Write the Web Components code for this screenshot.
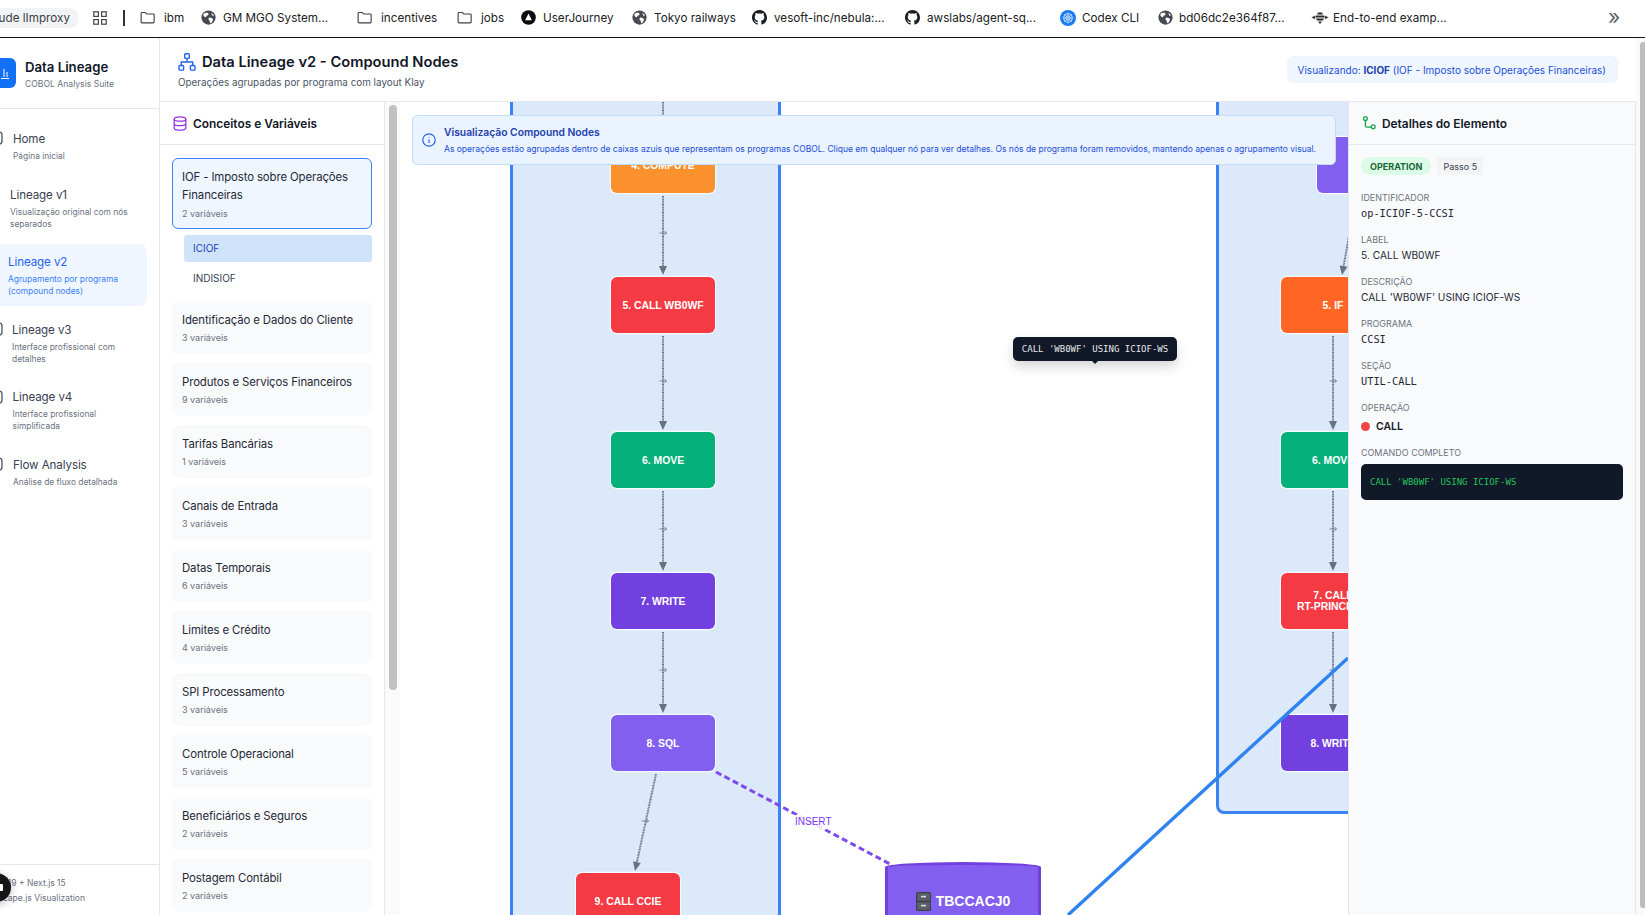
<!DOCTYPE html>
<html>
<head>
<meta charset="utf-8">
<title>Data Lineage</title>
<style>
  html, body { margin: 0; height: 100%; overflow: hidden; background: #fff; }
  body { font-family: Inter, "Liberation Sans", sans-serif; color: #111827; }
  #page { display: flex; flex-direction: column; width: 1645px; height: 915px; }
</style>
</head>
<body>
<div id="page">
  <bookmark-bar></bookmark-bar>
  <lineage-app></lineage-app>
</div>

<script>
const ICONS = {
  folder: `<svg viewBox="0 0 16 16" width="15" height="15" fill="none" stroke="#3c4043" stroke-width="1.2"><path d="M1.2 3.6c0-.5.4-.9.9-.9h3.6l1.5 1.6h7c.5 0 .9.4.9.9v7.6c0 .5-.4.9-.9.9H2.1c-.5 0-.9-.4-.9-.9z"/></svg>`,
  globe: `<svg viewBox="0 0 16 16" width="15" height="15"><circle cx="8" cy="8" r="7.6" fill="#474b50"/><path d="M3 3.6l3.2-.9 2 1.2-.7 1.8-1.7.4-.4 1.6-1.8-.5-1.2-1.6zM8.6 8l3 .5 1.4 1.6-1.6 3.2-1.7.7-.5-2.6-1.4-1.6zM11 2.8l2 1.6.7 2-1.8-.5z" fill="#fff"/></svg>`,
  journey: `<svg viewBox="0 0 16 16" width="15" height="15"><circle cx="8" cy="8" r="7.8" fill="#0c0c0c"/><path d="M8 3.8l3.6 7H4.4z" fill="#fff"/></svg>`,
  github: `<svg viewBox="0 0 16 16" width="15" height="15"><path fill="#1b1f23" d="M8 0C3.58 0 0 3.58 0 8c0 3.54 2.29 6.53 5.47 7.59.4.07.55-.17.55-.38 0-.19-.01-.82-.01-1.49-2.01.37-2.53-.49-2.69-.94-.09-.23-.48-.94-.82-1.13-.28-.15-.68-.52-.01-.53.63-.01 1.08.58 1.23.82.72 1.21 1.87.87 2.33.66.07-.52.28-.87.51-1.07-1.78-.2-3.64-.89-3.64-3.95 0-.87.31-1.59.82-2.15-.08-.2-.36-1.02.08-2.12 0 0 .67-.21 2.2.82.64-.18 1.32-.27 2-.27.68 0 1.36.09 2 .27 1.53-1.04 2.2-.82 2.2-.82.44 1.1.16 1.92.08 2.12.51.56.82 1.27.82 2.15 0 3.07-1.87 3.75-3.65 3.95.29.25.54.73.54 1.48 0 1.07-.01 1.93-.01 2.2 0 .21.15.46.55.38A8.013 8.013 0 0016 8c0-4.42-3.58-8-8-8z"/></svg>`,
  codex: `<svg viewBox="0 0 16 16" width="16" height="16"><circle cx="8" cy="8" r="8" fill="#1a7cf0"/><circle cx="8" cy="8" r="4.2" fill="none" stroke="#cfe3fd" stroke-width="1.1"/><circle cx="8" cy="8" r="2.2" fill="none" stroke="#fff" stroke-width=".9"/><path d="M8 2.4v11.2M2.4 8h11.2M4 4l8 8M12 4l-8 8" stroke="#bcd8fb" stroke-width=".6"/></svg>`,
  bee: `<svg viewBox="0 0 18 16" width="18" height="16"><path d="M7 2.5h4l1 2H6zM5 5.6h8l1 2H4zM5 8.6h8l-1 2H6zM7 11.6h4l-2 2.4z" fill="#2a2a2a"/><path d="M4 5.5L.4 7.5 4 9.2zM14 5.5l3.6 2L14 9.2z" fill="#3f3f3f"/></svg>`,
};

// chrome's bookmark strip; every item carries its own slot width
class BookmarkBar extends HTMLElement {
  connectedCallback() {
    const items = [
      ['folder', 'ibm', 61, 9],
      ['globe', 'GM MGO System...', 156, 7],
      ['folder', 'incentives', 100, 9],
      ['folder', 'jobs', 64, 9],
      ['journey', 'UserJourney', 111, 7],
      ['globe', 'Tokyo railways', 120, 7],
      ['github', 'vesoft-inc/nebula:...', 153, 7],
      ['github', 'awslabs/agent-sq...', 155, 7],
      ['codex', 'Codex CLI', 98, 6],
      ['globe', 'bd06dc2e364f87...', 153, 6],
      ['bee', 'End-to-end examp...', 140, 4],
    ];
    this.attachShadow({ mode: 'open' }).innerHTML = `
      <style>
        :host {
          display: flex;
          align-items: center;
          height: 35px;
          padding-bottom: 2px;
          flex: none;
          border-bottom: 1.5px solid #111;
          font: 11.7px Inter, "Liberation Sans", sans-serif;
          color: #202124;
          overflow: hidden;
        }
        .tab {
          width: 78px;
          height: 20px;
          display: flex;
          align-items: center;
          justify-content: flex-end;
          padding-right: 8px;
          box-sizing: border-box;
          background: #f1f3f4;
          border-radius: 0 8px 8px 0;
          white-space: nowrap;
          color: #3c4043;
          overflow: hidden;
        }
        .apps { margin-left: 15px; width: 14px; height: 14px; flex: none; }
        .sep { margin-left: 16px; width: 2px; height: 16px; background: #333; flex: none; }
        .items { display: flex; margin-left: 15px; }
        .item { display: flex; align-items: center; flex: none; white-space: nowrap; }
        .item svg { flex: none; }
        .more { margin-left: 157px; color: #5f6368; font-size: 21px; line-height: 1; margin-top: -3px; }
      </style>
      <div class="tab">ude lImproxy</div>
      <svg class="apps" viewBox="0 0 14 14" fill="none" stroke="#444" stroke-width="1.2">
        <rect x=".8" y=".8" width="4.6" height="4.6"/><rect x="8.6" y=".8" width="4.6" height="4.6"/>
        <rect x=".8" y="8.6" width="4.6" height="4.6"/><rect x="8.6" y="8.6" width="4.6" height="4.6"/>
      </svg>
      <div class="sep"></div>
      <div class="items">
        ${items.map(([icon, text, width, gap]) => `
          <div class="item" style="width:${width}px;gap:${gap}px">${ICONS[icon]}<span>${text}</span></div>
        `).join('')}
      </div>
      <div class="more">»</div>
    `;
  }
}

class NavItem extends HTMLElement {
  connectedCallback() {
    const x = Number(this.getAttribute('x'));
    this.attachShadow({ mode: 'open' }).innerHTML = `
      <style>
        :host {
          display: flex;
          flex: none;
          height: ${this.getAttribute('h') || 62}px;
          margin-right: 12px;
          padding-left: ${x}px;
          box-sizing: border-box;
          border-radius: 0 8px 8px 0;
          font-size: 11.6px;
          letter-spacing: -.1px;
          color: #374151;
          align-items: center;
          position: relative;
        }
        :host([active]) { background: #eff6ff; color: #2563eb; }
        .desc { font-size: 8.4px; letter-spacing: 0; line-height: 12px; color: #6b7280; margin-top: 3px; white-space: pre-line; }
        :host([active]) .desc { color: #3b82f6; }
        .title { line-height: 16px; }
        .glyph { position: absolute; left: -11px; top: 50%; width: 14px; height: 14px; margin-top: var(--gy, -14px); }
      </style>
      ${this.hasAttribute('glyph') ? `<svg class="glyph" viewBox="0 0 14 14" fill="none" stroke="#4b5563" stroke-width="1.3"><rect x="1" y="1" width="12" height="12" rx="3"/></svg>` : ''}
      <div>
        <div class="title">${this.getAttribute('title')}</div>
        <div class="desc">${this.getAttribute('desc')}</div>
      </div>
    `;
  }
}

class AppSidebar extends HTMLElement {
  connectedCallback() {
    this.attachShadow({ mode: 'open' }).innerHTML = `
      <style>
        :host {
          display: flex;
          flex-direction: column;
          flex: none;
          width: 160px;
          box-sizing: border-box;
          border-right: 1px solid #e5e7eb;
          overflow: hidden;
          position: relative;
        }
        .brand {
          height: 71px;
          flex: none;
          box-sizing: border-box;
          border-bottom: 1px solid #e5e7eb;
          display: flex;
          align-items: center;
          gap: 9px;
        }
        .logo {
          width: 16px;
          height: 30px;
          flex: none;
          background: #1270f6;
          border-radius: 0 6px 6px 0;
          display: flex;
          align-items: center;
        }
        .brand-text { margin-top: 3px; }
        .name { font-size: 13.2px; font-weight: 600; line-height: 17px; color: #111827; }
        .tag { font-size: 8.6px; line-height: 14px; color: #6b7280; margin-top: 1px; white-space: nowrap; }
        nav { flex: 1; display: flex; flex-direction: column; }
        footer {
          height: 51px;
          flex: none;
          box-sizing: border-box;
          border-top: 1px solid #e5e7eb;
          padding-top: 11px;
          font-size: 8.5px;
          line-height: 15px;
          color: #6b7280;
          white-space: nowrap;
        }
        .dev {
          position: absolute;
          left: -18px;
          top: 835px;
          width: 29px;
          height: 29px;
          border-radius: 50%;
          background: #161616;
          box-shadow: 0 2px 8px rgba(0,0,0,.25);
        }
        .dev::after {
          content: '';
          position: absolute;
          left: 16px;
          top: 11px;
          width: 5px;
          height: 7px;
          background: #fff;
          border-radius: 1px;
        }
      </style>
      <div class="brand">
        <div class="logo">
          <svg width="16" height="30" viewBox="0 0 16 30" fill="none" stroke="#fff" stroke-width="1">
            <path d="M4 11v8M7 14v5M1 20.5h8" />
          </svg>
        </div>
        <div class="brand-text">
          <div class="name">Data Lineage</div>
          <div class="tag">COBOL Analysis Suite</div>
        </div>
      </div>
      <nav>
        <nav-item x="13" h="61" glyph title="Home" desc="Página inicial" style="margin-top:7px;--gy:-15.5px"></nav-item>
        <nav-item x="10" h="62" title="Lineage v1" desc="Visualização original com nós&#10;separados"></nav-item>
        <nav-item x="8" h="62" active title="Lineage v2" desc="Agrupamento por programa&#10;(compound nodes)" style="margin-top:5px"></nav-item>
        <nav-item x="12" h="68" glyph title="Lineage v3" desc="Interface profissional com&#10;detalhes" style="margin-top:3px;--gy:-21px"></nav-item>
        <nav-item x="12.5" h="67" glyph title="Lineage v4" desc="Interface profissional&#10;simplificada" style="--gy:-20.5px"></nav-item>
        <nav-item x="13" h="56" glyph title="Flow Analysis" desc="Análise de fluxo detalhada" style="--gy:-15px"></nav-item>
      </nav>
      <footer>
        <div style="margin-left:-17.4px">React 19 + Next.js 15</div>
        <div style="margin-left:-20.5px">Cytoscape.js Visualization</div>
      </footer>
      <div class="dev"></div>
    `;
  }
}

class AppHeader extends HTMLElement {
  connectedCallback() {
    this.attachShadow({ mode: 'open' }).innerHTML = `
      <style>
        :host {
          display: flex;
          align-items: center;
          justify-content: space-between;
          height: 64px;
          flex: none;
          box-sizing: border-box;
          border-bottom: 1.5px solid #e5e7eb;
          padding: 0 18px 0 18px;
        }
        .top { display: flex; align-items: center; gap: 6px; margin-top: 1px; }
        h1 { margin: 0; font-size: 14.7px; line-height: 20px; font-weight: 600; color: #111827; }
        p { margin: 3px 0 0; font-size: 9.9px; line-height: 14px; color: #4b5563; }
        .chip {
          height: 27px;
          padding: 0 12px 0 11px;
          display: flex;
          align-items: center;
          background: #eff6ff;
          border-radius: 6px;
          font-size: 10px;
          color: #1d4ed8;
          white-space: pre;
        }
        .chip b { color: #1e40af; font-weight: 700; }
      </style>
      <div>
        <div class="top">
          <svg width="18" height="18" viewBox="0 0 18 18" fill="none" stroke="#2563eb" stroke-width="1.4">
            <rect x="6.7" y=".8" width="4.6" height="4.6" rx=".8"/><rect x="1" y="12.5" width="4.6" height="4.6" rx=".8"/><rect x="12.4" y="12.5" width="4.6" height="4.6" rx=".8"/>
            <path d="M3.3 12.5V9h11.4v3.5M9 5.4V9"/>
          </svg>
          <h1>Data Lineage v2 - Compound Nodes</h1>
        </div>
        <p>Operações agrupadas por programa com layout Klay</p>
      </div>
      <div class="chip">Visualizando: <b>ICIOF</b> (IOF - Imposto sobre Operações Financeiras)</div>
    `;
  }
}

class ConceptCard extends HTMLElement {
  connectedCallback() {
    this.attachShadow({ mode: 'open' }).innerHTML = `
      <style>
        :host {
          display: block;
          box-sizing: border-box;
          height: 53px;
          padding: 10px 10px 0;
          background: #f9fafb;
          border-radius: 6px;
          font-size: 11.4px;
          letter-spacing: -.12px;
          line-height: 18px;
          color: #1f2937;
        }
        :host([active]) {
          padding: 9px 9px 0;
          height: 71px;
          background: #eff6ff;
          border: 1.3px solid #3b82f6;
        }
        small { display: block; font-size: 9px; letter-spacing: 0; line-height: 18px; color: #6b7280; }
        :host([active]) small { margin-top: 1px; }
      </style>
      <div>${this.getAttribute('name')}</div>
      <small>${this.getAttribute('count')} variáveis</small>
    `;
  }
}

class ConceptPanel extends HTMLElement {
  connectedCallback() {
    const cards = [
      ['Identificação e Dados do Cliente', 3],
      ['Produtos e Serviços Financeiros', 9],
      ['Tarifas Bancárias', 1],
      ['Canais de Entrada', 3],
      ['Datas Temporais', 6],
      ['Limites e Crédito', 4],
      ['SPI Processamento', 3],
      ['Controle Operacional', 5],
      ['Beneficiários e Seguros', 2],
      ['Postagem Contábil', 2],
    ];
    this.attachShadow({ mode: 'open' }).innerHTML = `
      <style>
        :host { display: flex; flex: none; width: 240px; height: 100%; overflow: hidden; }
        .col { width: 224px; flex: none; border-right: 1px solid #e5e7eb; box-sizing: content-box; }
        .head {
          height: 43px;
          box-sizing: border-box;
          border-bottom: 1px solid #e5e7eb;
          display: flex;
          align-items: center;
          gap: 6px;
          padding: 0 13px;
          font-size: 11.9px;
          font-weight: 600;
          color: #111827;
        }
        .list { padding: 13px 12px 0; display: flex; flex-direction: column; gap: 9px; }
        .subs { margin: -3px 0 0 12px; }
        .sub { height: 27px; line-height: 27px; padding-left: 9px; font-size: 10px; color: #374151; border-radius: 3px; }
        .sub.on { background: #cfe4fb; color: #1e40af; margin-bottom: 3px; }
        .rail { flex: 1; background: #fafafa; position: relative; padding: 3px 4px 0 4px; }
        .thumb { width: 8px; height: 585px; background: #c1c1c1; border-radius: 4px; }
      </style>
      <div class="col">
        <div class="head">
          <svg width="14" height="15" viewBox="0 0 14 15" fill="none" stroke="#9333ea" stroke-width="1.3">
            <ellipse cx="7" cy="3" rx="5.8" ry="2.2"/><path d="M1.2 3v9c0 1.2 2.6 2.2 5.8 2.2s5.8-1 5.8-2.2V3M1.2 7.5c0 1.2 2.6 2.2 5.8 2.2s5.8-1 5.8-2.2"/>
          </svg>
          Conceitos e Variáveis
        </div>
        <div class="list">
          <concept-card active name="IOF - Imposto sobre Operações Financeiras" count="2"></concept-card>
          <div class="subs">
            <div class="sub on">ICIOF</div>
            <div class="sub">INDISIOF</div>
          </div>
          ${cards.map(([name, count]) => `<concept-card name="${name}" count="${count}"></concept-card>`).join('')}
        </div>
      </div>
      <div class="rail"><div class="thumb"></div></div>
    `;
  }
}

// node of the cytoscape graph, placed on the canvas
class FlowNode extends HTMLElement {
  connectedCallback() {
    const color = this.getAttribute('color');
    this.attachShadow({ mode: 'open' }).innerHTML = `
      <style>
        :host {
          position: absolute;
          left: ${this.getAttribute('x')}px;
          top: ${this.getAttribute('y')}px;
          width: 104px;
          height: 56px;
          box-sizing: border-box;
          display: flex;
          align-items: center;
          justify-content: center;
          text-align: center;
          background: ${color};
          border-radius: 6px;
          box-shadow: 0 0 0 1.2px rgba(255,255,255,.75);
          font: bold 10.4px/11px "Liberation Sans", Arial, sans-serif;
          color: #fff;
          white-space: pre-line;
        }
      </style>
      <slot></slot>
    `;
  }
}

class LineageCanvas extends HTMLElement {
  connectedCallback() {
    const gray = '#66727f';
    const straight = (x1, y1, x2, y2, lx, ly) => {
      const a = Math.atan2(y2 - y1, x2 - x1);
      const bx = x2 - Math.cos(a) * 9, by = y2 - Math.sin(a) * 9;
      const px = Math.cos(a + Math.PI / 2) * 4, py = Math.sin(a + Math.PI / 2) * 4;
      return `<line x1="${x1}" y1="${y1}" x2="${bx}" y2="${by}" stroke="${gray}" stroke-width="2" stroke-dasharray="1 .6"/>
        <polygon points="${x2},${y2} ${bx + px},${by + py} ${bx - px},${by - py}" fill="${gray}"/>
        ${lx ? `<path d="M${lx - 3.5} ${ly}h7M${lx + 1.5} ${ly - 2}l2 2-2 2" stroke="${gray}" stroke-width=".8" fill="none"/>` : ''}`;
    };
    this.attachShadow({ mode: 'open' }).innerHTML = `
      <style>
        :host {
          display: block;
          position: relative;
          flex: 1;
          min-width: 0;
          height: 100%;
          overflow: hidden;
          background: #fff;
        }
        .group {
          position: absolute;
          box-sizing: border-box;
          background: #dbe9fb;
          border: 3px solid #3b82f6;
          border-radius: 8px;
        }
        svg.edges { position: absolute; left: 0; top: 0; width: 948px; height: 813px; }
        .info {
          position: absolute;
          left: 12px;
          top: 13px;
          width: 924px;
          height: 50px;
          box-sizing: border-box;
          background: #eaf3fe;
          border: 1px solid #bfdbfe;
          border-radius: 5px;
          display: flex;
          align-items: center;
          gap: 8px;
          padding: 0 9px;
        }
        .info svg { flex: none; }
        .info b { display: block; font-size: 10.3px; line-height: 14px; font-weight: 600; color: #1e40af; }
        .info span { display: block; font-size: 8.52px; line-height: 13px; color: #1d4ed8; margin-top: 4px; white-space: nowrap; }
        .tip {
          position: absolute;
          left: 613px;
          top: 235px;
          width: 164px;
          height: 24px;
          background: #111827;
          border-radius: 5px;
          box-shadow: 0 6px 12px rgba(0,0,0,.16);
          font: 9px/24px "DejaVu Sans Mono", monospace;
          color: #e5e7eb;
          text-align: center;
        }
        .tip::after {
          content: '';
          position: absolute;
          left: 79px;
          top: 24px;
          border: 3px solid transparent;
          border-top-color: #111827;
          border-bottom: 0;
        }
        .insert {
          position: absolute;
          left: 394px;
          top: 713px;
          padding: 0 1px;
          font: 10px/14px "Liberation Sans", Arial, sans-serif;
          color: #7c3aed;
          background: rgba(255,255,255,.85);
        }
        .db {
          position: absolute;
          left: 485px;
          top: 760px;
          width: 156px;
          height: 80px;
          box-sizing: border-box;
          background: #835ff0;
          border: 3px solid #7340e0;
          border-radius: 78px / 5px;
          display: flex;
          align-items: flex-start;
          justify-content: center;
          gap: 5px;
          padding-top: 27px;
          font: bold 14px/18px "Liberation Sans", Arial, sans-serif;
          color: #fff;
        }
      </style>
      <div class="group" style="left:110px;top:-10px;width:271px;height:900px"></div>
      <div class="group" style="left:816px;top:-10px;width:300px;height:722px"></div>
      <svg class="edges" viewBox="400 102 948 813">
        <line x1="663" y1="102" x2="663" y2="116" stroke="${gray}" stroke-width="2" stroke-dasharray="1 .6"/>
        ${straight(663, 196, 663, 275, 663, 233)}
        ${straight(663, 336, 663, 430, 663, 381)}
        ${straight(663, 491, 663, 571, 663, 529)}
        ${straight(663, 632, 663, 713, 663, 670)}
        ${straight(656, 774, 635, 871, 645, 821)}
        ${straight(1349, 236, 1342, 275)}
        ${straight(1333, 336, 1333, 430, 1333, 381)}
        ${straight(1333, 491, 1333, 571, 1333, 529)}
        ${straight(1333, 632, 1333, 713, 1333, 670)}
      </svg>
      <slot></slot>
      <svg class="edges" viewBox="400 102 948 813">
        <line x1="716" y1="772" x2="890" y2="864" stroke="#7c4dee" stroke-width="3" stroke-dasharray="6 3.5"/>
        <line x1="1068" y1="915" x2="1348" y2="658" stroke="#2f83ee" stroke-width="3.4"/>
      </svg>
      <div class="insert">INSERT</div>
      <div class="db">
        <svg width="15" height="19" viewBox="0 0 15 19">
          <rect x="0" y="0" width="15" height="19" rx="1.5" fill="#3c4046"/>
          <rect x="1.2" y="1.2" width="12.6" height="7.6" fill="#5b6068"/><rect x="1.2" y="10.2" width="12.6" height="7.6" fill="#5b6068"/>
          <rect x="5" y="3.8" width="5" height="1.6" fill="#d8dade"/><rect x="5" y="12.8" width="5" height="1.6" fill="#d8dade"/>
        </svg>
        TBCCACJ0
      </div>
      <div class="info">
        <svg width="14" height="14" viewBox="0 0 14 14" fill="none" stroke="#2563eb" stroke-width="1.2">
          <circle cx="7" cy="7" r="6.2"/><path d="M7 6.4v3.6M7 4v.6"/>
        </svg>
        <div>
          <b>Visualização Compound Nodes</b>
          <span>As operações estão agrupadas dentro de caixas azuis que representam os programas COBOL. Clique em qualquer nó para ver detalhes. Os nós de programa foram removidos, mantendo apenas o agrupamento visual.</span>
        </div>
      </div>
      <div class="tip">CALL 'WB0WF' USING ICIOF-WS</div>
    `;
  }
}

class DetailField extends HTMLElement {
  connectedCallback() {
    const mono = this.hasAttribute('mono');
    this.attachShadow({ mode: 'open' }).innerHTML = `
      <style>
        :host { display: block; height: 42px; padding-top: 7px; box-sizing: border-box; }
        .k { font-size: 8.95px; line-height: 13px; color: #6b7280; text-transform: uppercase; }
        .v {
          margin-top: 2px;
          line-height: 15px;
          font-size: ${mono ? '10.3px' : '10.2px'};
          font-family: ${mono ? '"DejaVu Sans Mono", monospace' : 'inherit'};
          color: #1f2937;
        }
      </style>
      <div class="k">${this.getAttribute('label')}</div>
      <div class="v">${this.getAttribute('value')}</div>
    `;
  }
}

class DetailsPanel extends HTMLElement {
  connectedCallback() {
    this.attachShadow({ mode: 'open' }).innerHTML = `
      <style>
        :host {
          display: block;
          flex: none;
          width: 288px;
          height: 100%;
          box-sizing: border-box;
          background: #f9fafb;
          border-left: 1px solid #e5e7eb;
          border-right: 1px solid #e5e7eb;
        }
        .head {
          height: 43px;
          box-sizing: border-box;
          border-bottom: 1px solid #e5e7eb;
          display: flex;
          align-items: center;
          gap: 6px;
          padding: 0 13px;
          font-size: 11.9px;
          font-weight: 600;
          color: #111827;
        }
        .body { padding: 12px 12px 0; }
        .badges { display: flex; gap: 6px; height: 18px; margin-bottom: 9px; }
        .op, .step { display: flex; align-items: center; font-size: 9px; height: 18px; }
        .op { padding: 0 9px; background: #dcfce7; color: #166534; font-weight: 700; border-radius: 9px; }
        .step { padding: 0 6px; background: #f3f4f6; color: #374151; border-radius: 3px; }
        .k { font-size: 8.95px; line-height: 13px; color: #6b7280; padding-top: 7px; }
        .call { display: flex; align-items: center; gap: 6px; height: 18px; margin-top: 3px; font-size: 10.5px; font-weight: 600; color: #111827; }
        .dot { width: 9px; height: 9px; border-radius: 50%; background: #ef4444; }
        .code {
          margin-top: 5px;
          height: 36px;
          box-sizing: border-box;
          padding: 0 9px;
          background: #111827;
          border-radius: 5px;
          font: 9px/37px "DejaVu Sans Mono", monospace;
          color: #22c55e;
        }
      </style>
      <div class="head">
        <svg width="14" height="14" viewBox="0 0 14 14" fill="none" stroke="#16a34a" stroke-width="1.3">
          <circle cx="3.4" cy="2.6" r="1.9"/><circle cx="11.2" cy="10.8" r="1.9"/><path d="M3.4 4.5v5.2c0 1 .6 1.4 1.6 1.4h4.3"/>
        </svg>
        Detalhes do Elemento
      </div>
      <div class="body">
        <div class="badges"><div class="op">OPERATION</div><div class="step">Passo 5</div></div>
        <detail-field mono label="Identificador" value="op-ICIOF-5-CCSI"></detail-field>
        <detail-field label="Label" value="5. CALL WB0WF"></detail-field>
        <detail-field label="Descrição" value="CALL 'WB0WF' USING ICIOF-WS"></detail-field>
        <detail-field mono label="Programa" value="CCSI"></detail-field>
        <detail-field mono label="Seção" value="UTIL-CALL"></detail-field>
        <div class="k">OPERAÇÃO</div>
        <div class="call"><span class="dot"></span>CALL</div>
        <div class="k" style="padding-top:11px">COMANDO COMPLETO</div>
        <div class="code">CALL 'WB0WF' USING ICIOF-WS</div>
      </div>
    `;
  }
}

class LineageApp extends HTMLElement {
  connectedCallback() {
    this.attachShadow({ mode: 'open' }).innerHTML = `
      <style>
        :host { display: flex; flex: 1; min-height: 0; }
        .main { display: flex; flex-direction: column; flex: 1; min-width: 0; }
        .row { display: flex; flex: 1; min-height: 0; }
        .scroll { width: 9px; flex: none; padding: 4px 0 7px 4px; box-sizing: border-box; background: #fafafa; }
        .scroll div { width: 5px; height: 100%; background: #bdbdbd; border-radius: 3px 0 0 3px; }
      </style>
      <app-sidebar></app-sidebar>
      <div class="main">
        <app-header></app-header>
        <div class="row">
          <concept-panel></concept-panel>
          <lineage-canvas>
            <flow-node x="211" y="35" color="#fb912c">4. COMPUTE</flow-node>
            <flow-node x="211" y="175" color="#f43a43">5. CALL WB0WF</flow-node>
            <flow-node x="211" y="330" color="#06b07a">6. MOVE</flow-node>
            <flow-node x="211" y="471" color="#7340e0">7. WRITE</flow-node>
            <flow-node x="211" y="613" color="#835ff0">8. SQL</flow-node>
            <flow-node x="176" y="771" color="#f43a43">9. CALL CCIE</flow-node>
            <flow-node x="917" y="35" color="#835ff0"></flow-node>
            <flow-node x="881" y="175" color="#ff6625">5. IF</flow-node>
            <flow-node x="881" y="330" color="#06b07a">6. MOVE</flow-node>
            <flow-node x="881" y="471" color="#f43a43">7. CALL
RT-PRINCIPAL</flow-node>
            <flow-node x="881" y="613" color="#7340e0">8. WRITE</flow-node>
          </lineage-canvas>
          <details-panel></details-panel>
        </div>
      </div>
      <div class="scroll"><div></div></div>
    `;
  }
}

customElements.define('bookmark-bar', BookmarkBar);
customElements.define('nav-item', NavItem);
customElements.define('app-sidebar', AppSidebar);
customElements.define('app-header', AppHeader);
customElements.define('concept-card', ConceptCard);
customElements.define('concept-panel', ConceptPanel);
customElements.define('flow-node', FlowNode);
customElements.define('lineage-canvas', LineageCanvas);
customElements.define('detail-field', DetailField);
customElements.define('details-panel', DetailsPanel);
customElements.define('lineage-app', LineageApp);
</script>
</body>
</html>
